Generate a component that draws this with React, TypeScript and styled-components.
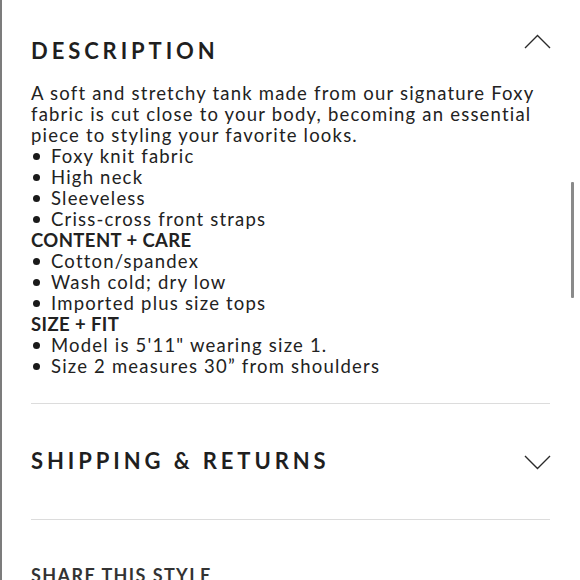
import React from "react";
import styled, { createGlobalStyle } from "styled-components";

const Global = createGlobalStyle`
  html, body { margin: 0; padding: 0; background: #fff; }
  body { font-family: "Lato", "Noto Sans", sans-serif; color: #222; overflow: hidden; }
`;

const Page = styled.div`
  position: relative;
  width: 580px;
  height: 580px;
  box-sizing: border-box;
  border-left: 2px solid #7c7c7c;
  padding: 0 30px 0 29px;
  overflow: hidden;
`;

const Section = styled.section<{ $top: number; $bottom: number }>`
  padding: ${(p) => p.$top}px 0 ${(p) => p.$bottom}px;
  border-bottom: 1px solid #dcdcdc;
`;

const HeaderRow = styled.div`
  display: flex;
  justify-content: space-between;
  align-items: center;
  height: 30px;
`;

const Title = styled.h2`
  margin: 0;
  font-family: "Lato", sans-serif;
  font-weight: 700;
  font-size: 22px;
  line-height: 30px;
  letter-spacing: 3.9px;
  color: #1f1f1f;
`;

const ChevronBox = styled.svg<{ $shift: number }>`
  width: 27px;
  height: 15px;
  margin-right: -1px;
  transform: translateY(${(p) => p.$shift}px);
  flex: none;
`;

const Body = styled.div`
  margin-top: 17px;
  font-size: 18.5px;
  line-height: 21px;
  letter-spacing: 1.2px;
  color: #222;
`;

const Para = styled.p`
  margin: 0;
`;

const Sub = styled.div`
  font-weight: 700;
  letter-spacing: 0.4px;
`;

const List = styled.ul`
  margin: 0;
  padding: 0;
  list-style: none;
`;

const Item = styled.li`
  display: flex;
  align-items: center;
  &::before {
    content: "";
    width: 7px;
    height: 7px;
    border-radius: 50%;
    background: #1a1a1a;
    margin: 0 11px 0 2px;
    flex: none;
  }
`;

const Share = styled.div`
  margin-top: 43px;
  font-weight: 700;
  font-size: 18px;
  line-height: 24px;
  letter-spacing: 1.4px;
  color: #333;
`;

const ScrollThumb = styled.div`
  position: absolute;
  right: 6px;
  top: 182px;
  width: 3px;
  height: 116px;
  background: #8a8a8a;
  border-radius: 1px;
`;

const Chevron = ({ up }: { up?: boolean }) => (
  <ChevronBox viewBox="0 0 27 15" $shift={up ? -10 : 1}>
    <polyline
      points={up ? "1,14 13.5,1.5 26,14" : "1,1 13.5,13.5 26,1"}
      fill="none"
      stroke="#2a2a2a"
      strokeWidth="1.4"
    />
  </ChevronBox>
);

const groups: { title?: string; items: string[] }[] = [
  { items: ["Foxy knit fabric", "High neck", "Sleeveless", "Criss-cross front straps"] },
  { title: "CONTENT + CARE", items: ["Cotton/spandex", "Wash cold; dry low", "Imported plus size tops"] },
  { title: "SIZE + FIT", items: ["Model is 5'11\" wearing size 1.", "Size 2 measures 30\u201d from shoulders"] },
];

export default function App() {
  return (
    <>
      <Global />
      <Page>
        <Section $top={36} $bottom={26}>
          <HeaderRow>
            <Title>DESCRIPTION</Title>
            <Chevron up />
          </HeaderRow>
          <Body>
            <Para>
              A soft and stretchy tank made from our signature Foxy
              <br />
              fabric is cut close to your body, becoming an essential
              <br />
              piece to styling your favorite looks.
            </Para>
            {groups.map((g, i) => (
              <React.Fragment key={i}>
                {g.title && <Sub>{g.title}</Sub>}
                <List>
                  {g.items.map((t) => (
                    <Item key={t}>{t}</Item>
                  ))}
                </List>
              </React.Fragment>
            ))}
          </Body>
        </Section>
        <Section $top={42} $bottom={43}>
          <HeaderRow>
            <Title>SHIPPING &amp; RETURNS</Title>
            <Chevron />
          </HeaderRow>
        </Section>
        <Share>SHARE THIS STYLE</Share>
        <ScrollThumb />
      </Page>
    </>
  );
}
